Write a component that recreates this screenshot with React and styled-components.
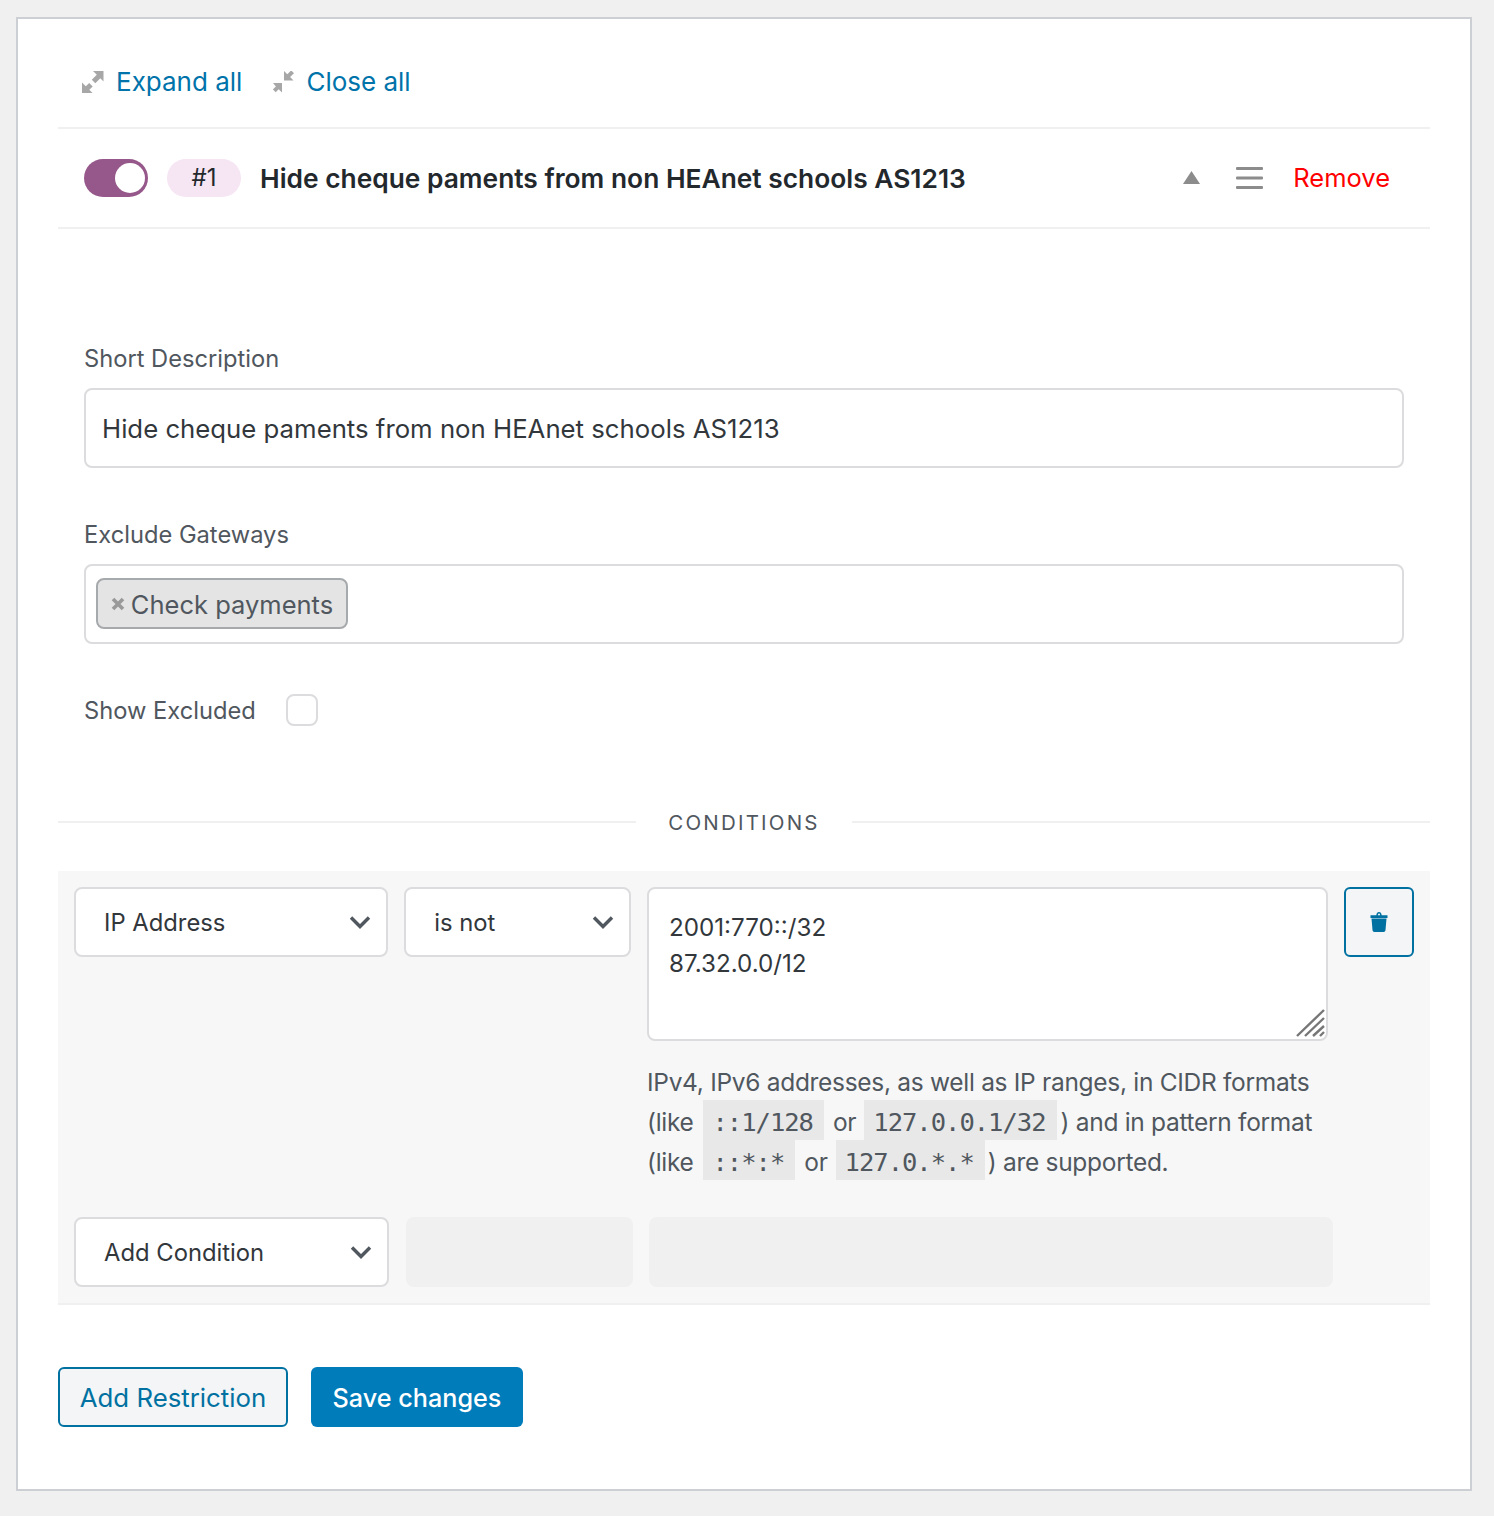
import React from "react";
import styled, { createGlobalStyle } from "styled-components";

const Global = createGlobalStyle`
  html, body { margin: 0; padding: 0; background: #f0f0f1; }
  body { font-family: Inter, "Liberation Sans", sans-serif; color: #50575e; font-size: 25px; }
  * { box-sizing: border-box; }
`;

const Page = styled.div`
  padding: 17px 22px 25px 16px;
  height: 1516px;
`;
const Panel = styled.div`
  height: 1474px;
  background: #fff;
  border: 2px solid #ccd0d4;
  padding: 0 40px;
`;
const Toolbar = styled.div`
  height: 110px;
  display: flex;
  align-items: center;
  padding: 18px 24px 0;
  border-bottom: 2px solid #f0f0f1;
  gap: 31px;
`;
const ToolLink = styled.a`
  display: flex;
  align-items: center;
  gap: 12px;
  color: #0073aa;
  font-size: 26px;
  line-height: 32px;
`;
const Header = styled.div`
  height: 100px;
  display: flex;
  align-items: center;
  padding: 0 40px 1px 26px;
  border-bottom: 2px solid #f0f0f1;
`;
const Toggle = styled.span`
  width: 64px;
  height: 38px;
  border-radius: 19px;
  background: #96588a;
  display: flex;
  align-items: center;
  justify-content: flex-end;
  padding-right: 3px;
  flex: none;
`;
const Knob = styled.span`
  width: 30px;
  height: 30px;
  border-radius: 50%;
  background: #fff;
`;
const Badge = styled.span`
  width: 74px;
  height: 38px;
  border-radius: 19px;
  background: #f6e5f3;
  margin-left: 19px;
  display: flex;
  align-items: center;
  justify-content: center;
  font-size: 24px;
  color: #23282d;
`;
const Title = styled.div`
  margin-left: 19px;
  flex: 1;
  font-size: 26.35px;
  font-weight: 600;
  color: #23282d;
  white-space: nowrap;
`;
const IconSlot = styled.span`
  display: flex;
  align-items: center;
  margin-right: ${(p) => p.$gap}px;
`;
const Remove = styled.a`
  color: #ff0000;
  font-size: 25.5px;
`;
const Form = styled.div`
  padding: 115px 26px 0;
`;
const Field = styled.div`
  margin-bottom: ${(p) => p.$mb}px;
`;
const Label = styled.label`
  display: block;
  font-size: 23.7px;
  line-height: 30px;
  margin-bottom: 14px;
  color: #50575e;
`;
const TextBox = styled.div`
  height: 80px;
  border: 2px solid #dcdcde;
  border-radius: 8px;
  padding: 0 16px;
  display: flex;
  align-items: center;
  font-size: 25.75px;
  color: #32373c;
`;
const TokenBox = styled(TextBox)`
  padding: 0 10px 1px;
`;
const Token = styled.span`
  height: 51px;
  width: 252px;
  display: flex;
  align-items: center;
  justify-content: center;
  gap: 6px;
  background: #e4e4e4;
  border: 2px solid #a7aaad;
  border-radius: 8px;
  color: #50575e;
  font-size: 25.5px;
  padding-top: 1px;
`;
const CheckRow = styled.div`
  display: flex;
  align-items: center;
  height: 32px;
  font-size: 23.7px;
  gap: 30px;
`;
const Check = styled.span`
  width: 32px;
  height: 32px;
  border: 2px solid #dcdcde;
  border-radius: 8px;
  background: #fff;
`;
const Divider = styled.div`
  display: flex;
  align-items: center;
  margin-top: 84px;
  height: 24px;
  font-size: 20.5px;
  letter-spacing: 2.2px;
  color: #50575e;
  gap: 32px;
  &::before, &::after {
    content: "";
    flex: 1;
    height: 2px;
    background: #f0f0f1;
  }
`;
const Conditions = styled.div`
  margin-top: 37px;
  height: 434px;
  background: #f7f7f8;
  border-bottom: 2px solid #f0f0f1;
  padding: 16px 16px 0 16px;
`;
const CondRow = styled.div`
  display: grid;
  grid-template-columns: 314px 226.5px 680.5px 70px;
  column-gap: 16.25px;
  align-items: start;
`;
const Select = styled.div`
  height: 70px;
  background: #fff;
  border: 2px solid #dcdcde;
  border-radius: 8px;
  display: flex;
  align-items: center;
  justify-content: space-between;
  padding: 0 14px 0 28px;
  font-size: 23.8px;
  color: #32373c;
`;
const ValueCol = styled.div`
  display: flex;
  flex-direction: column;
`;
const TextArea = styled.div`
  position: relative;
  height: 154px;
  background: #fff;
  border: 2px solid #dcdcde;
  border-radius: 8px;
  padding: 21px 20px;
  font-size: 24.2px;
  line-height: 36px;
  color: #32373c;
`;
const Grip = styled.svg`
  position: absolute;
  right: 1px;
  bottom: 1px;
`;
const TrashBtn = styled.button`
  width: 70px;
  height: 70px;
  background: #f3f5f6;
  border: 2px solid #0071a1;
  border-radius: 6px;
  display: flex;
  align-items: center;
  justify-content: center;
  padding: 0;
`;
const Help = styled.div`
  margin-top: 21px;
  font-size: 24.5px;
  letter-spacing: -0.3px;
  line-height: 40px;
  color: #50575e;
  white-space: nowrap;
`;
const Code = styled.code`
  display: inline-block;
  font-family: "DejaVu Sans Mono", "Liberation Mono", monospace;
  font-size: 25.5px;
  line-height: 44px;
  height: 40px;
  padding: 0 11px 0 9px;
  background: #e8e8e8;
  margin: -2px ${(p) => p.$mr ?? 9}px 0 ${(p) => p.$ml ?? 10}px;
  letter-spacing: -1px;
  vertical-align: top;
`;
const AddRow = styled.div`
  display: grid;
  grid-template-columns: 315px 227px 684px;
  column-gap: 16.5px;
  margin-top: 35px;
`;
const Ghost = styled.div`
  height: 70px;
  background: #f0f0f1;
  border-radius: 8px;
`;
const Actions = styled.div`
  display: flex;
  gap: 23px;
  margin-top: 62px;
`;
const Secondary = styled.button`
  width: 230px;
  height: 60px;
  background: #f3f5f6;
  border: 2px solid #0071a1;
  border-radius: 6px;
  color: #0071a1;
  font: 25.8px Inter, sans-serif;
  padding: 0;
`;
const Primary = styled.button`
  width: 212px;
  height: 60px;
  background: #007cba;
  border: none;
  border-radius: 6px;
  color: #fff;
  font: 500 25.2px Inter, sans-serif;
  padding: 1px 0 0;
`;

const Chevron = () => (
  <svg width="24" height="16" viewBox="0 0 24 16" fill="none">
    <path d="M3 3.5 12 12.5 21 3.5" stroke="#50575e" strokeWidth="3.4" />
  </svg>
);

const ExpandIcon = () => (
  <svg width="22" height="22" viewBox="0 0 22 22" fill="#a7a7a7">
    <path d="M11 0h10.500v10.500l-3.200-3.200-5 5-3.500-3.500 5-5z" />
    <path d="M0 11.500V22h10.500l-3.200-3.200 3.400-3.400-3.500-3.500-3.400 3.400z" />
  </svg>
);
const CollapseIcon = () => (
  <svg width="21" height="22" viewBox="0 0 21 22" fill="#a7a7a7">
    <path d="M11 0v9.500h9.500l-3.400-3.400 3.900-3.900-2.800-2.800-3.900 3.900z" />
    <path d="M0 12h9v9.500l-3.300-3.300-3 3-2.800-2.800 3-3z" />
  </svg>
);

export default function App() {
  return (
    <>
      <Global />
      <Page>
        <Panel>
          <Toolbar>
            <ToolLink><ExpandIcon />Expand all</ToolLink>
            <ToolLink><CollapseIcon />Close all</ToolLink>
          </Toolbar>
          <Header>
            <Toggle><Knob /></Toggle>
            <Badge>#1</Badge>
            <Title>Hide cheque paments from non HEAnet schools AS1213</Title>
            <IconSlot $gap={36}>
              <svg width="17" height="13" viewBox="0 0 17 13"><path d="M8.500 0 17 13H0z" fill="#8c8c8c" /></svg>
            </IconSlot>
            <IconSlot $gap={30}>
              <svg width="27" height="22" viewBox="0 0 27 22" fill="#8c8c8c">
                <rect width="27" height="3" y="0" rx="1" />
                <rect width="27" height="3" y="9.500" rx="1" />
                <rect width="27" height="3" y="19" rx="1" />
              </svg>
            </IconSlot>
            <Remove>Remove</Remove>
          </Header>
          <Form>
            <Field $mb={52}>
              <Label>Short Description</Label>
              <TextBox>Hide cheque paments from non HEAnet schools AS1213</TextBox>
            </Field>
            <Field $mb={50}>
              <Label>Exclude Gateways</Label>
              <TokenBox>
                <Token>
                  <svg width="14" height="14" viewBox="0 0 14 14"><path d="M2 2 12 12M12 2 2 12" stroke="#999" strokeWidth="3.600" /></svg>
                  Check payments
                </Token>
              </TokenBox>
            </Field>
            <CheckRow>Show Excluded<Check /></CheckRow>
          </Form>
          <Divider>CONDITIONS</Divider>
          <Conditions>
            <CondRow>
              <Select>IP Address<Chevron /></Select>
              <Select>is not<Chevron /></Select>
              <ValueCol>
                <TextArea>
                  2001:770::/32<br />87.32.0.0/12
                  <Grip width="30" height="30" viewBox="0 0 30 30" stroke="#777" strokeWidth="2.400">
                    <path d="M2 28 29 2M10 28 29 10M18 28 29 18M25 28 29 24" />
                  </Grip>
                </TextArea>
                <Help>
                  IPv4, IPv6 addresses, as well as IP ranges, in CIDR formats<br />
                  (like<Code>::1/128</Code>or<Code $ml={8} $mr={4}>127.0.0.1/32</Code>) and in pattern format<br />
                  (like<Code>::*:*</Code>or<Code $ml={8} $mr={3}>127.0.*.*</Code>) are supported.
                </Help>
              </ValueCol>
              <TrashBtn>
                <svg width="18" height="20" viewBox="0 0 18 20" fill="#0071a1">
                  <path fillRule="evenodd" d="M.5 3.200h5.800C6.600.8 7.500 0 9 0s2.400.8 2.700 3.200h5.800V6H.5zM7.800 3.200h2.400C10 2 9.600 1.500 9 1.500S8 2 7.800 3.200z" />
                  <path d="M1.500 6.500h15l-1 11.500c-.1 1.300-.8 2-2 2h-9c-1.200 0-1.900-.7-2-2z" />
                </svg>
              </TrashBtn>
            </CondRow>
            <AddRow>
              <Select>Add Condition<Chevron /></Select>
              <Ghost />
              <Ghost />
            </AddRow>
          </Conditions>
          <Actions>
            <Secondary>Add Restriction</Secondary>
            <Primary>Save changes</Primary>
          </Actions>
        </Panel>
      </Page>
    </>
  );
}
